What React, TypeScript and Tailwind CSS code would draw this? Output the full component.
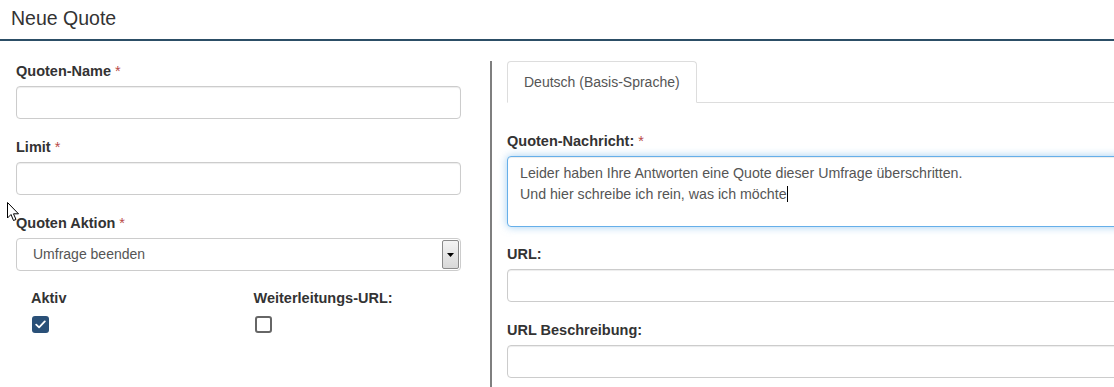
const fieldLabel = "block h-[20px] leading-[20px] mb-[5px] text-[14.5px] font-bold text-[#333]";
const inputClass =
  "block w-full h-[33px] rounded-[4px] border border-[#ccc] bg-white shadow-[inset_0_1px_1px_rgba(0,0,0,0.075)]";

function Req() {
  return <span className="text-[#b94a48] font-normal ml-[4px]">*</span>;
}

function Label({ text, required }: { text: string; required?: boolean }) {
  return (
    <div className={fieldLabel}>
      {text}
      {required && <Req />}
    </div>
  );
}

function Cursor() {
  return (
    <svg
      className="absolute left-[7px] top-[202px]"
      width="13"
      height="20"
      viewBox="0 0 13 20"
    >
      <path
        d="M0.5 0.5 L0.5 16 L4 12.5 L6.5 18.5 L9 17.5 L6.5 11.8 L11.5 11.8 Z"
        fill="#fff"
        stroke="#000"
        strokeWidth="1"
        strokeLinejoin="round"
      />
    </svg>
  );
}

export default function App() {
  return (
    <div className="relative w-[1114px] h-[387px] overflow-hidden bg-white font-['Liberation_Sans',Arial,sans-serif] text-[#333]">
      <div className="h-[41px] border-b-2 border-[#2c4e66] flex items-center pl-[11px] pb-[2px]">
        <h1 className="text-[19.5px] leading-none text-[#333]">Neue Quote</h1>
      </div>

      <div className="flex h-[346px]">
        {/* left column */}
        <div className="w-[490px] shrink-0 pl-[16px] pr-[29px] pt-[20px]">
          <Label text="Quoten-Name" required />
          <div className={inputClass} />

          <div className="mt-[18px]">
            <Label text="Limit" required />
            <div className={inputClass} />
          </div>

          <div className="mt-[18px]">
            <Label text="Quoten Aktion" required />
            <div className="flex h-[33px] rounded-[4px] border border-[#ccc] bg-white py-[1px] pr-[1px]">
              <div className="flex-1 pl-[16px] flex items-center text-[14px] text-[#555]">
                Umfrage beenden
              </div>
              <div className="w-[17px] flex items-center justify-center border border-[#8a8a8a] rounded-[2px] bg-gradient-to-b from-[#f4f4f4] to-[#d8d8d8]">
                <svg width="7" height="4" viewBox="0 0 7 4">
                  <path d="M0 0 H7 L3.5 4 Z" fill="#000" />
                </svg>
              </div>
            </div>
          </div>

          <div className="grid grid-cols-2 mt-[17px]">
            <div className="px-[15px]">
              <div className="h-[20px] leading-[20px] text-[14.5px] font-bold">Aktiv</div>
              <div className="mt-[8px] ml-px w-[17px] h-[17px] rounded-[3px] bg-[#2a5078] flex items-center justify-center">
                <svg width="11" height="9" viewBox="0 0 11 9">
                  <path
                    d="M1.2 4.6 L4.1 7.3 L9.8 1.4"
                    fill="none"
                    stroke="#fff"
                    strokeWidth="1.8"
                    strokeLinecap="round"
                    strokeLinejoin="round"
                  />
                </svg>
              </div>
            </div>
            <div className="px-[15px]">
              <div className="h-[20px] leading-[20px] text-[14.5px] font-bold">Weiterleitungs-URL:</div>
              <div className="mt-[8px] ml-px w-[17px] h-[17px] rounded-[3px] border-2 border-[#666] bg-white" />
            </div>
          </div>
        </div>

        {/* divider */}
        <div className="w-[2px] shrink-0 mt-[20px] bg-[#7f7f7f]" />

        {/* right column */}
        <div className="w-[720px] shrink-0 pl-[15px] pt-[20px]">
          <div className="flex h-[42px] border-b border-[#ddd]">
            <div className="h-[42px] -mb-px px-[16px] flex items-center rounded-t-[4px] border border-[#ddd] border-b-white bg-white text-[14px] text-[#555]">
              Deutsch (Basis-Sprache)
            </div>
          </div>

          <div className="mt-[28px]">
            <Label text="Quoten-Nachricht:" required />
            <div className="h-[71px] rounded-[4px] border border-[#66afe9] bg-white px-[12px] py-[6px] text-[14.2px] leading-[21px] text-[#555] shadow-[inset_0_1px_1px_rgba(0,0,0,0.075),0_0_8px_rgba(102,175,233,0.6)]">
              <div>Leider haben Ihre Antworten eine Quote dieser Umfrage überschritten.</div>
              <div>
                Und hier schreibe ich rein, was ich möchte
                <span className="inline-block w-px h-[16px] bg-[#000] align-[-3px]" />
              </div>
            </div>
          </div>

          <div className="mt-[17px]">
            <Label text="URL:" />
            <div className={inputClass} />
          </div>

          <div className="mt-[18px]">
            <Label text="URL Beschreibung:" />
            <div className={inputClass} />
          </div>
        </div>
      </div>

      <Cursor />
    </div>
  );
}
